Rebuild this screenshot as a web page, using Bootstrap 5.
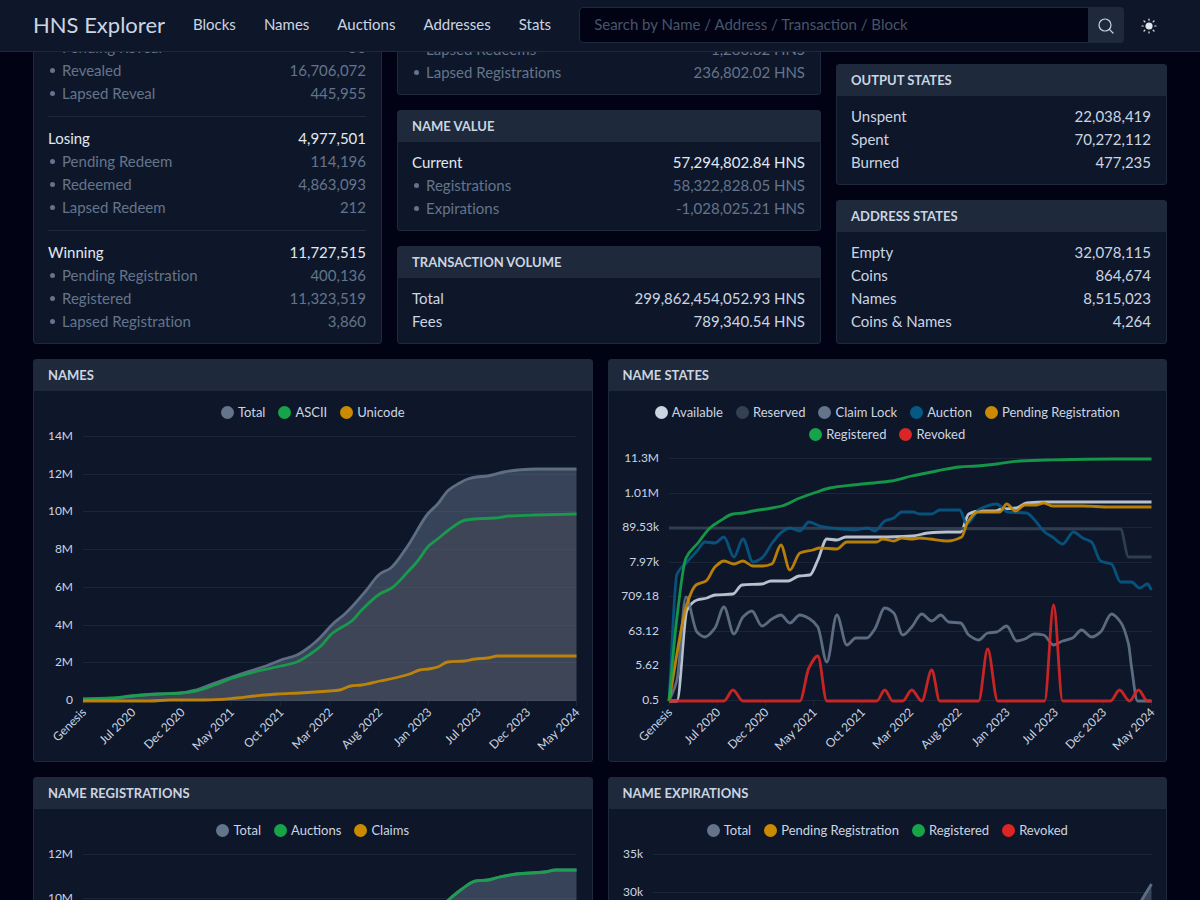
<!DOCTYPE html>
<html lang="en">
<head>
<meta charset="utf-8">
<meta name="viewport" content="width=device-width, initial-scale=1">
<title>HNS Explorer</title>
<link href="https://cdn.jsdelivr.net/npm/bootstrap@5.3.0/dist/css/bootstrap.min.css" rel="stylesheet">
<style>
:root{--page:#010314;--panel:#0e1729;--line:#1e293b;--ink:#cbd5e1;--strong:#e2e8f0;--dim:#64748b}
body{background:var(--page);color:var(--ink);font-family:Lato,"Liberation Sans",sans-serif;font-size:15px;line-height:23px}
.topbar{background:var(--panel);border-bottom:1px solid var(--line);min-height:52px;padding:0 33px 2px}
.brand{font-size:22px;line-height:48px;color:var(--ink)}
.brand,.menu a{text-decoration:none}
.menu{gap:28px;margin:0 28px}
.menu a{color:var(--ink)}
.menu a:hover,.brand:hover{color:#fff}
.search{height:36px}
.search .form-control{background:var(--page);border-color:var(--line);color:var(--ink);font-size:15px;line-height:23px;padding:0 14px;border-radius:4px}
.search .form-control::placeholder{color:#475569;opacity:1}
.search .btn{background:var(--line);color:var(--ink);width:36px;border-radius:4px}
.theme{color:var(--strong);padding:0 10px 0 17px}
main{padding:35px 33px 15px}
.tiles,.charts{gap:15px}
.stack{gap:15px}
@media (min-width:992px){
  .tiles{grid-template-columns:349fr 424fr 331fr}
  .charts{grid-template-columns:1fr 1fr}
}
.charts{margin-top:15px}
.panel{background:var(--panel);border:1px solid var(--line);border-radius:3px;min-width:0}
.panel h2{background:var(--line);font-size:13px;line-height:31px;font-weight:700;margin:0;padding:0 14px;text-transform:uppercase}
.figures{margin:0;padding:9px 15px 10px 14px;font-variant-ligatures:none}
.figures div{display:flex;justify-content:space-between}
.figures dt,.figures dd{font-weight:400;margin:0}
.figures .total{color:var(--strong)}
.figures .part{color:var(--dim)}
.figures .part dt::before{content:"";display:inline-block;width:5px;height:5px;border-radius:50%;background:currentColor;margin:0 7px 3px 2px}
.figures.cut{padding-top:0}
.figures hr{margin:11px 0 10px;border-top:1px solid var(--line);opacity:1}
.plot{height:370px;padding-top:10px}
.legend{gap:0 13px;font-size:13px;line-height:22px;padding:0 14px;margin:0}
.legend li{display:flex;align-items:center;gap:4px}
.legend i{width:13px;height:13px;border-radius:50%}
.plot svg{display:block;width:100%;flex:1 1 0;min-height:0}
.plot text{font-size:12px;fill:var(--ink)}
.rule{stroke:var(--line);stroke-opacity:.8}
</style>
</head>
<body>
<header class="topbar fixed-top d-flex align-items-center">
  <a class="brand" href="#">HNS Explorer</a>
  <nav class="menu d-flex" aria-label="Main">
    <a href="#">Blocks</a><a href="#">Names</a><a href="#">Auctions</a><a href="#">Addresses</a><a href="#">Stats</a>
  </nav>
  <form class="search input-group flex-grow-1 w-auto">
    <input class="form-control" type="search" aria-label="Search" placeholder="Search by Name / Address / Transaction / Block">
    <button class="btn border-0 p-0" type="button" aria-label="Search">
      <svg width="16" height="16" viewBox="0 0 16 16" fill="none" stroke="currentColor" stroke-width="1.2" stroke-linecap="round"><circle cx="7" cy="7" r="6"/><path d="M11.4 11.4 15 15"/></svg>
    </button>
  </form>
  <button class="theme btn border-0" type="button" aria-label="Switch theme">
    <svg width="16" height="16" viewBox="0 0 16 16" stroke="currentColor" stroke-width="1.2" stroke-linecap="round"><circle cx="8" cy="8" r="3" fill="currentColor"/><path d="M8 1v1.2M8 13.8V15M1 8h1.2M13.8 8H15M3 3l.9.9M12.1 12.1l.9.9M3 13l.9-.9M12.1 3.9 13 3"/></svg>
  </button>
</header>

<main>
  <div class="tiles d-grid">
    <section class="panel">
      <dl class="figures cut">
        <div class="part"><dt>Pending Reveal</dt><dd>56</dd></div>
        <div class="part"><dt>Revealed</dt><dd>16,706,072</dd></div>
        <div class="part"><dt>Lapsed Reveal</dt><dd>445,955</dd></div>
        <hr>
        <div class="total"><dt>Losing</dt><dd>4,977,501</dd></div>
        <div class="part"><dt>Pending Redeem</dt><dd>114,196</dd></div>
        <div class="part"><dt>Redeemed</dt><dd>4,863,093</dd></div>
        <div class="part"><dt>Lapsed Redeem</dt><dd>212</dd></div>
        <hr>
        <div class="total"><dt>Winning</dt><dd>11,727,515</dd></div>
        <div class="part"><dt>Pending Registration</dt><dd>400,136</dd></div>
        <div class="part"><dt>Registered</dt><dd>11,323,519</dd></div>
        <div class="part"><dt>Lapsed Registration</dt><dd>3,860</dd></div>
      </dl>
    </section>
    <div class="stack d-flex flex-column justify-content-end">
      <section class="panel">
        <dl class="figures cut">
          <div class="part"><dt>Lapsed Redeems</dt><dd>1,286.82 HNS</dd></div>
          <div class="part"><dt>Lapsed Registrations</dt><dd>236,802.02 HNS</dd></div>
        </dl>
      </section>
      <section class="panel">
        <h2>Name Value</h2>
        <dl class="figures">
          <div class="total"><dt>Current</dt><dd>57,294,802.84 HNS</dd></div>
          <div class="part"><dt>Registrations</dt><dd>58,322,828.05 HNS</dd></div>
          <div class="part"><dt>Expirations</dt><dd>-1,028,025.21 HNS</dd></div>
        </dl>
      </section>
      <section class="panel">
        <h2>Transaction Volume</h2>
        <dl class="figures">
          <div><dt>Total</dt><dd>299,862,454,052.93 HNS</dd></div>
          <div><dt>Fees</dt><dd>789,340.54 HNS</dd></div>
        </dl>
      </section>
    </div>
    <div class="stack d-flex flex-column justify-content-end">
      <section class="panel">
        <h2>Output States</h2>
        <dl class="figures">
          <div><dt>Unspent</dt><dd>22,038,419</dd></div>
          <div><dt>Spent</dt><dd>70,272,112</dd></div>
          <div><dt>Burned</dt><dd>477,235</dd></div>
        </dl>
      </section>
      <section class="panel">
        <h2>Address States</h2>
        <dl class="figures">
          <div><dt>Empty</dt><dd>32,078,115</dd></div>
          <div><dt>Coins</dt><dd>864,674</dd></div>
          <div><dt>Names</dt><dd>8,515,023</dd></div>
          <div><dt>Coins &amp; Names</dt><dd>4,264</dd></div>
        </dl>
      </section>
    </div>
  </div>

  <div class="charts d-grid">
    <section class="panel"><h2>Names</h2><div class="plot d-flex flex-column" data-chart="names"></div></section>
    <section class="panel"><h2>Name States</h2><div class="plot d-flex flex-column" data-chart="states"></div></section>
    <section class="panel"><h2>Name Registrations</h2><div class="plot d-flex flex-column" data-chart="registrations"></div></section>
    <section class="panel"><h2>Name Expirations</h2><div class="plot d-flex flex-column" data-chart="expirations"></div></section>
  </div>
</main>

<script src="https://cdn.jsdelivr.net/npm/bootstrap@5.3.0/dist/js/bootstrap.bundle.min.js"></script>
<script>
const C={slate:'#64748b',green:'#16a34a',amber:'#ca8a04',white:'#cbd5e1',grey:'#334155',blue:'#075985',red:'#dc2626'};
const months=['Genesis','Jul 2020','Dec 2020','May 2021','Oct 2021','Mar 2022','Aug 2022','Jan 2023','Jul 2023','Dec 2023','May 2024'];

// box: [left, top, right, bottom] of the coordinate space that each series is given in.
const charts={
 names:{left:49,box:[83,437,577,701],labels:['14M','12M','10M','8M','6M','4M','2M','0'],series:[
  {name:'Total',color:C.slate,fill:C.slate,alpha:.48,pts:'83,699 108,699 132,696 157,694 181,693 196,690 215,683 232,677 250,671 266,666 281,660 297,655 312,645 320,638 333,624 345,614 352,607 366,591 380,574 391,568 408,546 428,514 438,504 449,490 460,483 468,479 477,477 488,476 504,472 518,470 537,469 577,469'},
  {name:'ASCII',color:C.green,fill:'#6b5a4c',alpha:.12,pts:'83,699 110,698 132,696 160,694 181,693 196,691 215,685 233,678 247,674 263,670 281,666 297,662 312,653 320,647 333,633 352,621 362,610 380,594 392,588 408,572 418,561 429,546 438,539 449,530 466,520 475,519 495,518 510,516 535,515 577,514'},
  {name:'Unicode',color:C.amber,pts:'83,701 150,701 170,700 205,700 237,698 255,696 278,694 300,693 330,691 340,690 351,686 362,685 380,681 395,678 410,674 420,670 429,669 438,667 448,662 465,661 476,659 488,658 498,656 520,656 577,656'}]},
 states:{left:60,box:[669,459,1152,701],labels:['11.3M','1.01M','89.53k','7.97k','709.18','63.12','5.62','0.5'],series:[
  {name:'Available',color:C.white,pts:'669,701 677,701 687,610 697,600 707,598 715,595 733,594 742,585 762,584 771,581 788,581 799,576 810,575 818,560 827,539 837,540 846,537 880,537 913,536 928,533 947,532 961,532 969,514 980,511 995,511 1002,509 1017,508 1027,503 1047,502 1152,502'},
  {name:'Reserved',color:C.grey,pts:'669,528 1121,529 1129,557 1152,557'},
  {name:'Claim Lock',color:C.slate,pts:'669,701 677,680 686,597 697,632 705,637 715,628 724,607 734,634 743,617 752,611 762,626 772,619 781,615 790,623 800,615 810,619 818,627 827,662 837,615 847,645 856,638 867,638 875,629 885,608 894,613 903,635 912,627 922,614 932,621 941,615 949,622 961,623 969,635 979,640 988,633 997,632 1007,626 1017,641 1025,639 1035,634 1044,635 1054,645 1063,641 1073,638 1082,630 1092,637 1101,632 1112,614 1121,622 1129,644 1132,667 1138,701 1152,701'},
  {name:'Auction',color:C.blue,pts:'669,701 677,574 687,562 697,551 705,542 715,543 724,537 734,557 743,539 753,562 762,558 773,542 782,532 790,528 800,531 809,522 820,526 840,529 855,530 868,528 875,531 885,521 894,518 902,512 913,512 920,514 932,514 940,510 960,510 967,524 980,509 997,504 1008,512 1027,513 1035,520 1045,532 1053,537 1063,544 1074,532 1083,538 1092,542 1101,561 1112,564 1121,582 1132,582 1140,588 1148,584 1152,590'},
  {name:'Pending Registration',color:C.amber,pts:'669,701 687,604 696,585 706,581 715,567 724,561 734,564 743,561 753,566 763,566 772,564 781,545 790,570 800,553 813,550 820,548 837,549 847,542 877,542 883,539 894,541 902,538 912,539 920,538 930,539 948,541 962,537 968,522 978,512 1000,512 1007,504 1016,511 1025,505 1037,505 1044,503 1053,506 1083,506 1110,507 1152,507'},
  {name:'Registered',color:C.green,pts:'669,701 677,617 686,558 698,543 710,528 720,521 733,514 743,513 753,511 772,508 782,506 800,498 817,492 830,488 853,485 883,482 892,481 912,476 937,471 960,467 977,466 997,464 1020,461 1047,460 1113,459 1152,459'},
  {name:'Revoked',color:C.red,pts:'669,701 724,701 733,690 743,701 800,701 809,668 818,656 827,701 877,701 885,690 893,701 903,701 912,690 922,701 932,670 940,701 979,701 988,649 998,701 1045,701 1054,605 1063,701 1111,701 1120,690 1130,701 1139,690 1148,701 1152,701'}]},
 registrations:{left:49,box:[83,854,577,1118],labels:['12M','10M','8M','6M','4M','2M','0'],series:[
  {name:'Total',color:C.slate,fill:C.slate,alpha:.48,pts:'83,1117 181,1108 232,1090 281,1070 332,1030 380,980 410,945 430,917 450,898 461,889 476,880 488,879 500,876 517,873 545,871 556,869 577,869'},
  {name:'Auctions',color:C.green,pts:'83,1117 181,1108 232,1090 281,1070 332,1030 380,980 410,945 430,917 450,898 461,889 476,880 488,879 500,876 517,873 545,871 556,869 577,869'},
  {name:'Claims',color:C.amber,pts:'83,1118 577,1117'}]},
 expirations:{left:44,box:[653,854,1152,1118],labels:['35k','30k','25k','20k','15k','10k','5k','0'],series:[
  {name:'Total',color:C.slate,fill:C.slate,alpha:.48,pts:'653,1118 1090,1100 1110,990 1125,930 1141,901 1152,883'},
  {name:'Pending Registration',color:C.amber,pts:'653,1118 1152,1112'},
  {name:'Registered',color:C.green,pts:'653,1118 1130,1100 1152,1060'},
  {name:'Revoked',color:C.red,pts:'653,1118 1152,1117'}]}
};

// Monotone cubic path through the points, so that flat runs stay flat.
function curve(p){
  const n=p.length,d=[],m=[];
  for(let i=0;i<n-1;i++)d.push((p[i+1][1]-p[i][1])/(p[i+1][0]-p[i][0]));
  for(let i=0;i<n;i++){
    const a=d[i-1],b=d[i];
    m.push(a===undefined?b:b===undefined?a:a*b<=0?0:2*a*b/(a+b));
  }
  let s=`M${p[0][0]} ${p[0][1]}`;
  for(let i=0;i<n-1;i++){
    const h=(p[i+1][0]-p[i][0])/3;
    s+=`C${p[i][0]+h} ${p[i][1]+m[i]*h} ${p[i+1][0]-h} ${p[i+1][1]-m[i+1]*h} ${p[i+1][0]} ${p[i+1][1]}`;
  }
  return s;
}

function draw(el){
  const c=charts[el.dataset.chart];
  el.innerHTML='<ul class="legend list-unstyled d-flex flex-wrap justify-content-center">'+c.series.map(s=>`<li><i style="background:${s.color}"></i>${s.name}</li>`).join('')+'</ul><svg role="img"></svg>';
  const svg=el.querySelector('svg'),r=svg.getBoundingClientRect(),L=c.left,R=r.width-15,T=14,B=r.height-60,[x0,y0,x1,y1]=c.box;
  let o='';
  c.labels.forEach((t,i)=>{
    const y=Math.round(T+(B-T)*i/(c.labels.length-1))-.5;
    o+=`<path class="rule" d="M${L} ${y}H${R}"/><text x="${L-10}" y="${y+3}" text-anchor="end">${t}</text>`;
  });
  months.forEach((t,i)=>{
    const x=L+(R-L)*i/(months.length-1);
    o+=`<path class="rule" d="M${x} ${B}v5"/><text text-anchor="end" transform="translate(${x+4} ${B+12}) rotate(-45)">${t}</text>`;
  });
  c.series.forEach(s=>{
    const p=s.pts.split(' ').map(q=>{const[x,y]=q.split(',').map(Number);return[L+(x-x0)/(x1-x0)*(R-L),T+(y-y0)/(y1-y0)*(B-T)]});
    const d=curve(p);
    if(s.fill)o+=`<path d="${d}V${B}H${L}Z" fill="${s.fill}" fill-opacity="${s.alpha}"/>`;
    o+=`<path d="${d}" fill="none" stroke="${s.color}" stroke-width="2.8" stroke-opacity=".9"/>`;
  });
  svg.innerHTML=o;
}
const drawAll=()=>document.querySelectorAll('[data-chart]').forEach(draw);
drawAll();
addEventListener('resize',drawAll);
</script>
</body>
</html>
